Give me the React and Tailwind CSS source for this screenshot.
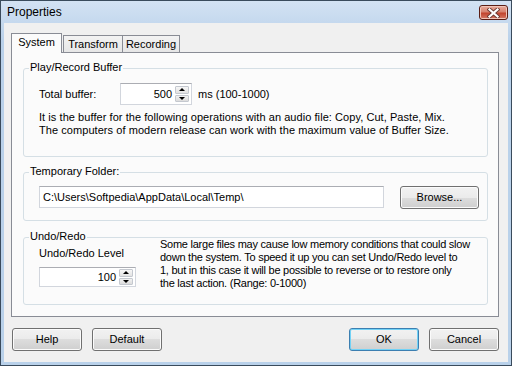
import React from "react";

function Spin({ value, width, height }) {
  return (
    <div className={`flex items-center border border-[#d2d6dd] border-t-[#abadb3] bg-white ${width} ${height}`}>
      <span className="flex-1 pr-[3px] text-right">{value}</span>
      <div className="mr-[2px] flex h-[16px] w-[14px] flex-col gap-px">
        <div className="flex flex-1 items-center justify-center rounded-[1px] border border-[#c4c8cf] bg-[linear-gradient(#f7f7f7,#e2e2e2)]">
          <div className="h-0 w-0 border-x-[3px] border-b-[3px] border-x-transparent border-b-black" />
        </div>
        <div className="flex flex-1 items-center justify-center rounded-[1px] border border-[#c4c8cf] bg-[linear-gradient(#f2f2f2,#dcdcdc)]">
          <div className="h-0 w-0 border-x-[3px] border-t-[3px] border-x-transparent border-t-black" />
        </div>
      </div>
    </div>
  );
}

function Group({ label, className, children }) {
  return (
    <div className={`relative rounded-[3px] border border-[#d5dfe5] ${className}`}>
      <span className="absolute left-[5px] top-[-8px] bg-[#fbfbfb] px-px leading-[13px]">{label}</span>
      {children}
    </div>
  );
}

function Button({ children, primary, width = "w-[70px]", extra = "" }) {
  return (
    <button
      className={
        primary
          ? `h-[23px] ${width} ${extra} rounded-[3px] border border-[#3c7fb1] bg-[linear-gradient(#f2f2f2_0%,#ebebeb_50%,#dddddd_50%,#cfcfcf_100%)] text-[11px] shadow-[inset_0_0_0_1px_#72d2f6]`
          : `h-[23px] ${width} ${extra} rounded-[3px] border border-[#707070] bg-[linear-gradient(#f2f2f2_0%,#ebebeb_50%,#dddddd_50%,#cfcfcf_100%)] text-[11px] shadow-[inset_0_0_0_1px_#fbfbfb]`
      }
    >
      {children}
    </button>
  );
}

export default function App() {
  return (
    <div className="flex h-[366px] w-[512px] flex-col border border-[#3a4b5c] bg-[linear-gradient(#d3e2f3,#b9d1ea_40px)] font-['Liberation_Sans',sans-serif] text-[11px] text-black">
      {/* title bar */}
      <div className="flex h-[22px] shrink-0 items-start">
        <span className="ml-[6px] mt-[4px] text-[12px] leading-[14px]">Properties</span>
        <div className="ml-auto mr-[3px] mt-[4px] flex h-[15px] w-[29px] items-center justify-center rounded-[3px] border border-[#5b1d14] bg-[linear-gradient(#e9ab9c,#d6826f_45%,#c2442e_55%,#d57a66)] shadow-[inset_0_0_0_1px_#f0c4b8]">
          <svg width="13" height="10" viewBox="0 0 13 10">
            <path d="M2.5 1.5 L10.5 8.5 M10.5 1.5 L2.5 8.5" stroke="#6b3a33" strokeWidth="4" strokeLinecap="square" />
            <path d="M2.5 1.5 L10.5 8.5 M10.5 1.5 L2.5 8.5" stroke="#ffffff" strokeWidth="2.2" strokeLinecap="square" />
          </svg>
        </div>
      </div>

      {/* client */}
      <div className="mx-[3px] mb-[3px] flex flex-1 flex-col bg-[#f0f0f0] pl-[7px] pt-[10px]">
        {/* tabs */}
        <div className="flex h-[19px] items-end">
          <div className="relative z-10 -mb-px flex h-[20px] w-[51px] items-center justify-center border border-b-0 border-[#898c95] bg-[#fbfbfb] pb-[2px]">
            System
          </div>
          <div className="ml-px flex h-[17px] w-[60px] items-center justify-center border border-b-0 border-[#898c95] bg-[linear-gradient(#f3f3f3,#e6e6e6)]">
            Transform
          </div>
          <div className="flex h-[17px] w-[57px] items-center justify-center border border-b-0 border-l-0 border-[#898c95] bg-[linear-gradient(#f3f3f3,#e6e6e6)]">
            Recording
          </div>
        </div>

        {/* panel */}
        <div className="flex h-[265px] w-[488px] flex-col border border-[#898c95] bg-[#fbfbfb] pl-[11px] pt-[15px]">
          <Group label="Play/Record Buffer" className="h-[89px] w-[465px] pl-[15px]">
            <div className="mt-[14px] flex h-[22px] items-center">
              <span className="w-[81px]">Total buffer:</span>
              <Spin value="500" width="w-[72px]" height="h-[22px]" />
              <span className="ml-[6px]">ms (100-1000)</span>
            </div>
            <p className="mt-[6px] leading-[13px] tracking-[0.06px]">
              It is the buffer for the following operations with an audio file: Copy, Cut, Paste, Mix.
              <br />
              The computers of modern release can work with the maximum value of Buffer Size.
            </p>
          </Group>

          <Group label="Temporary Folder:" className="mt-[15px] flex h-[49px] w-[465px] items-center pl-[15px] pt-[1px]">
            <div className="flex h-[22px] w-[345px] items-center border border-[#d2d6dd] border-t-[#abadb3] bg-white pl-[3px]">
              C:\Users\Softpedia\AppData\Local\Temp\
            </div>
            <Button width="w-[79px]" extra="ml-[16px]">Browse...</Button>
          </Group>

          <Group label="Undo/Redo" className="mt-[16px] flex h-[68px] w-[465px] pl-[15px]">
            <div className="flex w-[121px] flex-col">
              <span className="mt-[9px] leading-[13px]">Undo/Redo Level</span>
              <div className="mt-[7px]">
                <Spin value="100" width="w-[97px]" height="h-[20px]" />
              </div>
            </div>
            <p className="leading-[13px] tracking-[-0.25px]">
              Some large files may cause low memory conditions that could slow
              <br />
              down the system. To speed it up you can set Undo/Redo level to
              <br />
              1, but in this case it will be possible to reverse or to restore only
              <br />
              the last action. (Range: 0-1000)
            </p>
          </Group>
        </div>

        {/* bottom buttons */}
        <div className="ml-px mr-[9px] mt-[11px] flex items-center gap-[10px]">
          <Button>Help</Button>
          <Button>Default</Button>
          <div className="flex-1" />
          <Button primary>OK</Button>
          <Button>Cancel</Button>
        </div>
      </div>
    </div>
  );
}
